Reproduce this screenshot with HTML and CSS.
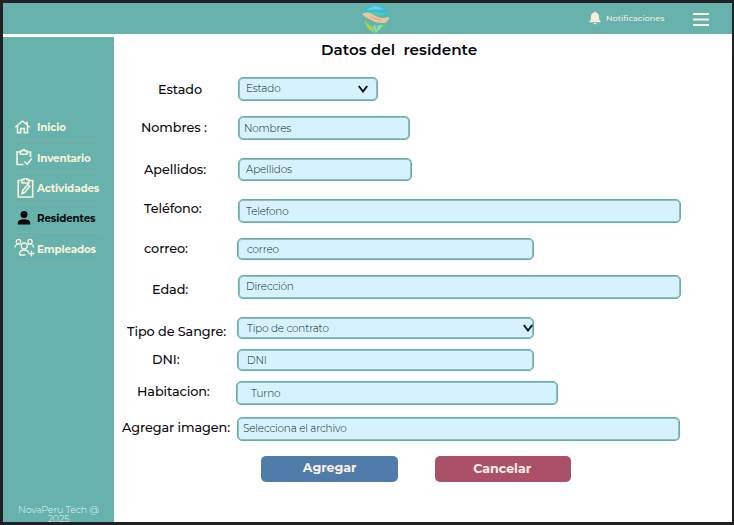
FILE: index.html
```html
<!DOCTYPE html>
<html lang="es">
<head>
<meta charset="utf-8">
<title>Datos del residente</title>
<link rel="stylesheet" href="styles.css">
</head>
<body>
<div class="app">
  <header class="topbar">
    <svg class="logo" viewBox="0 0 30 30">
      <path d="M2 13C2 5 8 1 15 1c7 0 12 5 12 12l-9-3-7 3z" fill="#35bfd4"/>
      <path d="M6 6c5-5 12-5 17 0-6-1-11 0-17 0z" fill="#6fcdf0"/>
      <path d="M4 9c6-4 12 1 22 0-5 4-13 2-22 0z" fill="#55cbb0"/>
      <path d="M3 16c3 1 5 3 8 5 5 1 10 0 15-3-2 6-7 8-11 12C9 27 4 23 3 16z" fill="#65c980"/>
      <path d="M4 18l7 5 3 6c-5-2-9-6-10-11z" fill="#a9ce5c"/>
      <path d="M12 23l2-3 1 6 3-5 4 0-7 8z" fill="#8fd9c8"/>
      <path d="M1 10c4-2 7-2 10 0 4 2 7 4 11 4l6-1c0 4-3 6-7 6-4 0-7-1-9-2l-4-2c-3-1-5-3-7-5z" fill="#edc49c"/>
      <path d="M10 13c4 2 7 3 11 3" fill="none" stroke="#b9a283" stroke-width=".7"/>
    </svg>
    <div class="notices">
      <svg class="bell" viewBox="0 0 12 14"><path d="M5 1.600a1 1 0 0 1 2 0c2 .5 3 2 3 4.200C10 8.800 10.600 9.500 11.700 10.500v.7H.3v-.7C1.400 9.500 2 8.800 2 5.800c0-2.200 1-3.700 3-4.200zM4.500 12h3c-.2 1.700-2.800 1.700-3 0z" fill="#f6ebd6"/></svg>
      <span>Notificaciones</span>
    </div>
    <svg class="burger" viewBox="0 0 16 13"><path d="M0 1h16M0 6.500h16M0 12h16" stroke="#f6efdc" stroke-width="1.900"/></svg>
  </header>
  <aside class="sidebar">
    <nav class="menu">
      <a class="item"><svg class="icon home" viewBox="0 0 20 20"><path d="M1.300 10.300L8.500 4l7.200 6.300M3.500 9v6.800h3.200v-4.300h3.600v4.300h3.200V9M13 7.500V4.500"/></svg><span>Inicio</span></a>
      <a class="item"><svg class="icon" viewBox="0 0 20 20"><path d="M6.500 4H3v12.500h6.500M13 4h3.500v5M6.500 3h2c0-2 2.500-2 2.500 0h2v3.200H6.500zM10.500 13.500l2.700 2.700 4.500-5.700"/></svg><span>Inventario</span></a>
      <a class="item"><svg class="icon" viewBox="0 0 20 20"><path d="M7.500 2.500H4.200v16.500h14.500V2.500H15M8 1.600h2c0-2.200 3-2.200 3 0h2v3.400H8zM8 15.500l.8-3 5-6 2 1.800-5 6z"/></svg><span>Actividades</span></a>
      <a class="item active"><svg class="icon" viewBox="0 0 20 20"><circle cx="10" cy="6.500" r="3.500"/><path d="M3.800 16.500v-2c0-4.500 12.400-4.500 12.400 0v2z"/></svg><span>Residentes</span></a>
      <a class="item"><svg class="icon wide" viewBox="0 0 22 20"><circle cx="5.500" cy="3.500" r="2.200"/><circle cx="17" cy="3.500" r="2.200"/><circle cx="11.300" cy="8" r="3"/><path d="M2 9.500c0-3 2.500-4 5.500-3M20.500 9.500c0-3-2.500-4-5.500-3M6.500 17c0-3 1.500-5 4.500-5s4 1 4.700 2.500M6.500 17h6M18.500 12.500v6M15.500 15.500h6"/></svg><span>Empleados</span></a>
    </nav>
    <footer class="credit">NovaPeru Tech @<br>2025</footer>
  </aside>
  <main class="content">
    <h1>Datos del  residente</h1>
    <form class="form">
      <div class="row r-estado"><label>Estado</label><div class="field"><span>Estado</span><svg class="chevron" viewBox="0 0 10 8"><path d="M.8 1L5 6.500 9.200 1"/></svg></div></div>
      <div class="row r-nombres"><label>Nombres :</label><div class="field"><span>Nombres</span></div></div>
      <div class="row r-apellidos"><label>Apellidos:</label><div class="field"><span>Apellidos</span></div></div>
      <div class="row r-telefono"><label>Teléfono:</label><div class="field"><span>Telefono</span></div></div>
      <div class="row r-correo"><label>correo:</label><div class="field"><span>correo</span></div></div>
      <div class="row r-edad"><label>Edad:</label><div class="field"><span>Dirección</span></div></div>
      <div class="row r-sangre"><label>Tipo de Sangre:</label><div class="field"><span>Tipo de contrato</span><svg class="chevron" viewBox="0 0 10 8"><path d="M.8 1L5 6.500 9.200 1"/></svg></div></div>
      <div class="row r-dni"><label>DNI:</label><div class="field"><span>DNI</span></div></div>
      <div class="row r-habitacion"><label>Habitacion:</label><div class="field"><span>Turno</span></div></div>
      <div class="row r-imagen"><label>Agregar imagen:</label><div class="field"><span>Selecciona el archivo</span></div></div>
      <div class="actions"><button type="button" class="add">Agregar</button><button type="button" class="cancel">Cancelar</button></div>
    </form>
  </main>
</div>
</body>
</html>
```
FILE: styles.css
```css
* { box-sizing: border-box; }
body {
  margin: 0;
  background: #202122;
  font-family: Montserrat, Inter, "Open Sans", sans-serif;
}
.app {
  width: 734px;
  height: 525px;
  padding: 3px 2px 3px 3px;
  display: grid;
  grid-template: 31px 1fr / 111px 1fr;
  overflow: hidden;
  background: linear-gradient(#fff, #fff) content-box, #202122;
}
.topbar {
  grid-column: 1 / -1;
  display: flex;
  align-items: center;
  background: #67b2ad;
}
.logo { width: 30px; height: 30px; margin-left: 358px; }
.notices {
  display: flex;
  align-items: center;
  gap: 5px;
  margin-left: 198px;
  color: #f6efdc;
  font-size: 8.100px;
  font-weight: 500;
}
.notices span { width: 59px; margin-top: -1px; white-space: nowrap; }
.bell { width: 12px; height: 14px; margin-top: -2px; }
.burger { width: 16px; height: 13px; margin-left: 28px; margin-top: 1px; }

.sidebar {
  margin-top: 3px;
  padding-top: 76px;
  display: flex;
  flex-direction: column;
  justify-content: space-between;
  background: #67b2ad;
}
.menu { margin-left: 11px; width: 87px; }
.item {
  height: 30px;
  display: flex;
  align-items: center;
  gap: 3px;
  color: #f7f5d9;
  font-size: 10.300px;
  letter-spacing: -.12px;
  font-weight: 700;
  border-bottom: 1px solid #83b09b;
  white-space: nowrap;
}
.item:first-child { height: 28px; padding-top: 1px; }
.item:nth-child(2) { height: 32px; padding-top: 3px; }
.item:nth-child(3) { height: 31px; }
.item:nth-child(4) { height: 29px; }
.item:nth-child(5) { padding-top: 4px; }
.icon { width: 20px; height: 20px; flex: none; fill: none; stroke: currentColor; stroke-width: 1.600; }
.home { stroke-width: 1.500; }
.wide { width: 22px; margin: -3px -1px 0; stroke-width: 1.300; }
.active { color: #050808; }
.active .icon { fill: currentColor; stroke: none; }
.credit {
  height: 17px;
  text-align: center;
  font-size: 9.500px;
  letter-spacing: -.15px;
  font-weight: 300;
  line-height: 9px;
  color: #e0f6f2;
}

h1 {
  margin: 0;
  padding: 7px 0 0 207px;
  height: 43px;
  font-size: 15.200px;
  line-height: 18px;
  font-weight: 600;
  white-space: pre;
  color: #080808;
}
.row { display: flex; height: 24px; }
label {
  width: 124px;
  flex: none;
  font-size: 12.800px;
  letter-spacing: -.08px;
  line-height: 26px;
  font-weight: 500;
  white-space: nowrap;
  color: #080808;
}
.field {
  display: flex;
  align-items: center;
  justify-content: space-between;
  border: 1px solid #68ada8;
  box-shadow: inset 0 0 0 1px #8bc0bf;
  border-radius: 5px;
  background: #d5f2fe;
  padding: 0 9px 0 7px;
  font-size: 10.400px;
  letter-spacing: -.14px;
  font-weight: 300;
  color: #0c1922;
  white-space: nowrap;
}
.chevron { width: 10px; height: 8px; fill: none; stroke: #0a1014; stroke-width: 1.900; }

.r-estado label { padding-left: 44px; }
.r-estado .field { width: 140px; padding-bottom: 1px; }
.r-nombres { margin-top: 15px; }
.r-nombres label { padding-left: 27px; margin-top: -1px; }
.r-nombres .field { width: 172px; padding-left: 5px; }
.r-apellidos { margin-top: 18px; height: 23px; }
.r-apellidos label { padding-left: 30px; margin-top: -1px; }
.r-apellidos .field { width: 174px; }
.r-telefono { margin-top: 18px; }
.r-telefono label { padding-left: 30px; margin-top: -3px; }
.r-telefono .field { width: 443px; }
.r-correo { margin-top: 15px; height: 22px; }
.r-correo label { padding-left: 30px; margin-top: -2px; width: 123px; }
.r-correo .field { width: 297px; padding-left: 9px; }
.r-edad { margin-top: 15px; }
.r-edad label { padding: 2px 0 0 38px; }
.r-edad .field { width: 443px; padding-bottom: 2px; }
.r-sangre { margin-top: 18px; height: 22px; }
.r-sangre label { padding: 2px 0 0 13px; width: 123px; }
.r-sangre .field { width: 297px; padding: 0 0 0 9px; }
.r-dni { margin-top: 10px; height: 22px; }
.r-dni label { padding-left: 38px; margin-top: -2px; width: 123px; }
.r-dni .field { width: 297px; padding-left: 9px; }
.r-habitacion { margin-top: 10px; }
.r-habitacion label { padding-left: 23px; margin-top: -2px; width: 122px; }
.r-habitacion .field { width: 322px; padding-left: 14px; }
.r-imagen { margin-top: 12px; }
.r-imagen label { padding-left: 8px; margin-top: -2px; width: 123px; }
.r-imagen .field { width: 443px; padding: 0 0 1px 5px; }
.actions { display: flex; gap: 37px; margin: 15px 0 0 147.400px; }
button {
  width: 136.500px;
  height: 26px;
  padding: 0 2px 1px 0;
  border: 0;
  border-radius: 5px;
  font: 700 12.600px Montserrat, Inter, sans-serif;
  color: #fdf0e4;
}
.add { background: #507cac; padding: 0 0 3px; }
.cancel { background: #aa5069; }
```
